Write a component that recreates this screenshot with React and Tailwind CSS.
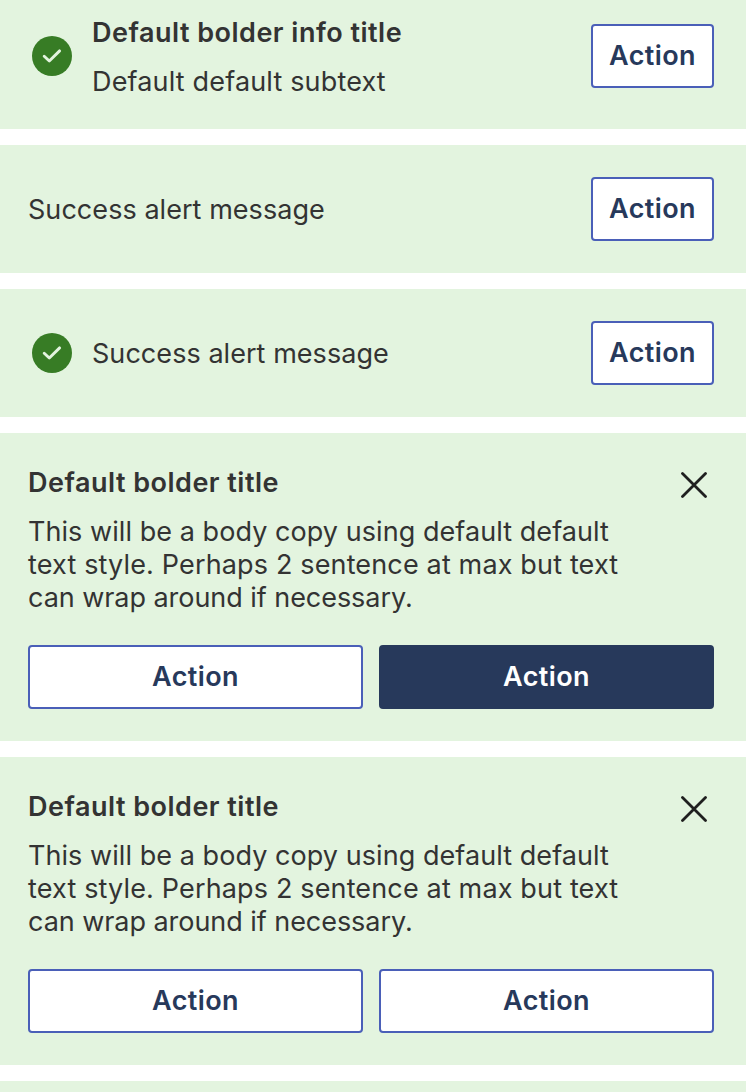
const font = "font-['Inter','Liberation_Sans',sans-serif]";
const title = "text-[27px] leading-[33px] font-semibold tracking-[0.49px]";
const body = "text-[27px] leading-[33px]";

function Check() {
  return (
    <svg width="40" height="40" viewBox="0 0 40 40" fill="none" className="shrink-0">
      <circle cx="20" cy="20" r="20" fill="#377c25" />
      <path d="M12.2 20.2l5.1 4.8L27.6 14.9" stroke="#e3f4df" strokeWidth="2.9" strokeLinecap="round" strokeLinejoin="round" />
    </svg>
  );
}

function Close() {
  return (
    <svg width="26" height="26" viewBox="0 0 26 26" fill="none" className="mt-[7px] mr-[7px] shrink-0">
      <path d="M1.5 1.5l23 23M24.5 1.5l-23 23" stroke="#1f1f1f" strokeWidth="2.8" strokeLinecap="round" />
    </svg>
  );
}

function Button({ primary = false, className = "" }) {
  const tone = primary ? "border-[#27395b] bg-[#27395b] text-white" : "border-[#4a5fb8] bg-white text-[#27395b]";
  return (
    <button className={`flex h-16 items-center justify-center rounded-[4px] border-2 text-[27px] leading-8 font-semibold tracking-[0.4px] ${tone} ${className}`}>
      Action
    </button>
  );
}

function Row({ icon = false }) {
  return (
    <section className="flex h-32 items-center bg-[#e3f4df] pr-8 pl-7">
      {icon && <div className="mr-5 ml-1"><Check /></div>}
      <p className={`grow tracking-[0.05px] ${body}`}>Success alert message</p>
      <Button className="w-[123px]" />
    </section>
  );
}

function Card({ primary = false }) {
  return (
    <section className="h-[308px] bg-[#e3f4df] pt-8 pr-8 pl-7">
      <div className="flex h-[180px] justify-between">
        <div className="pt-[1px]">
          <h2 className={title}>Default bolder title</h2>
          <p className={`mt-4 whitespace-nowrap ${body}`}>
            <span className="tracking-[0.06px]">This will be a body copy using default default</span><br />
            <span className="tracking-[0.15px]">text style. Perhaps 2 sentence at max but text</span><br />
            <span className="tracking-[-0.05px]">can wrap around if necessary.</span>
          </p>
        </div>
        <Close />
      </div>
      <div className="grid grid-cols-2 gap-4">
        <Button />
        <Button primary={primary} />
      </div>
    </section>
  );
}

export default function App() {
  return (
    <main className={`flex h-[1092px] w-[746px] flex-col gap-4 overflow-hidden bg-white text-[#333333] ${font}`}>
      <section className="flex h-[129px] shrink-0 items-start bg-[#e3f4df] pr-8 pl-8">
        <div className="mt-9 mr-5"><Check /></div>
        <div className="grow pt-4">
          <h2 className={title}>Default bolder info title</h2>
          <p className={`mt-4 tracking-[0.16px] ${body}`}>Default default subtext</p>
        </div>
        <Button className="mt-6 w-[123px]" />
      </section>
      <Row />
      <Row icon />
      <Card primary />
      <Card />
      <div className="h-[11px] shrink-0 bg-[#e3f4df]" />
    </main>
  );
}
